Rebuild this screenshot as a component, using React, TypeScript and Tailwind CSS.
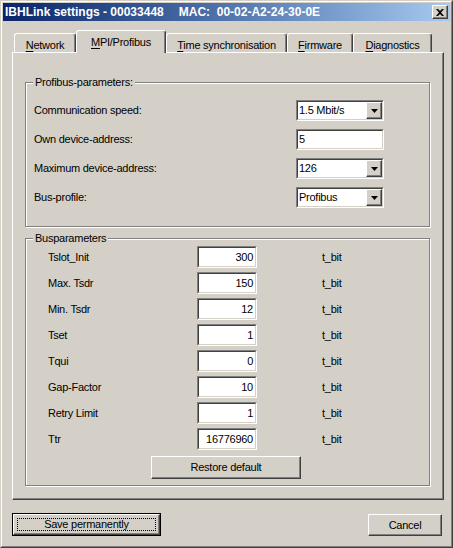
import React from "react";

const raised =
  "border border-t-white border-l-white border-b-[#404040] border-r-[#404040] shadow-[inset_-1px_-1px_0_#808080]";

function Sunken({ className = "", children }: { className?: string; children?: React.ReactNode }) {
  return (
    <div className={`border border-t-[#808080] border-l-[#808080] border-b-white border-r-white ${className}`}>
      <div className="flex h-full items-center border border-t-[#404040] border-l-[#404040] border-b-[#d4d0c8] border-r-[#d4d0c8] bg-white">
        {children}
      </div>
    </div>
  );
}

function Combo({ value }: { value: string }) {
  return (
    <Sunken className="h-[21px] w-[88px]">
      <span className="flex-1 pl-[1px] leading-none">{value}</span>
      <div className={`flex h-full w-[16px] items-center justify-center bg-[#d4d0c8] ${raised}`}>
        <svg width="7" height="4" viewBox="0 0 7 4">
          <path d="M0 0h7L3.5 4z" fill="#000" />
        </svg>
      </div>
    </Sunken>
  );
}

function Group({ title, className, children }: { title: string; className: string; children: React.ReactNode }) {
  return (
    <div className={`relative border border-[#808080] shadow-[inset_1px_1px_0_#fff,1px_1px_0_#fff] ${className}`}>
      <span className="absolute left-[7px] top-[-7px] bg-[#d4d0c8] px-[2px] leading-[12px]">{title}</span>
      {children}
    </div>
  );
}

function Tab({ label, u, width, selected }: { label: string; u: number; width: string; selected?: boolean }) {
  const text = (
    <span>
      {label.slice(0, u)}
      <span className="underline underline-offset-[2px]">{label[u]}</span>
      {label.slice(u + 1)}
    </span>
  );
  return (
    <div
      className={`flex items-start justify-center rounded-t-[3px] border-t border-l border-r border-t-white border-l-white border-r-[#404040] bg-[#d4d0c8] shadow-[inset_-1px_0_0_#808080] ${width} ${
        selected ? "relative z-10 -mb-px h-[23px] pt-[3px]" : "h-[19px] pt-[3px]"
      }`}
    >
      {text}
    </div>
  );
}

const busRows = [
  ["Tslot_Init", "300"],
  ["Max. Tsdr", "150"],
  ["Min. Tsdr", "12"],
  ["Tset", "1"],
  ["Tqui", "0"],
  ["Gap-Factor", "10"],
  ["Retry Limit", "1"],
  ["Ttr", "16776960"],
];

export default function App() {
  return (
    <div className="h-[548px] w-[453px] border border-t-[#d4d0c8] border-l-[#d4d0c8] border-b-[#404040] border-r-[#404040] bg-[#d4d0c8] font-['Liberation_Sans',Arial,sans-serif] text-[11px] tracking-[-0.25px] text-black">
      <div className="h-full border border-t-white border-l-white border-b-[#808080] border-r-[#808080] p-[1px]">
        {/* title bar */}
        <div className="flex h-[18px] items-center justify-between bg-linear-to-r from-[#0a246a] to-[#a6caf0] pl-[2px] pr-[2px]">
          <span className="whitespace-pre text-[12px] font-bold tracking-normal text-white">
            IBHLink settings - 00033448<span className="ml-[15px]">MAC:  00-02-A2-24-30-0E</span>
          </span>
          <div className={`flex h-[14px] w-[16px] items-center justify-center bg-[#d4d0c8] ${raised}`}>
            <svg width="8" height="7" viewBox="0 0 8 7">
              <path d="M0 0h2l2 2 2-2h2L5 3.5 8 7H6L4 5 2 7H0l3-3.5z" fill="#000" />
            </svg>
          </div>
        </div>

        {/* tabs */}
        <div className="mt-[10px] pl-[9px] pr-[6px]">
          <div className="flex h-[21px] items-end">
            <div className="ml-[2px] flex items-end">
              <Tab label="Network" u={0} width="w-[62px]" />
              <Tab label="MPI/Profibus" u={0} width="w-[90px]" selected />
              <Tab label="Time synchronisation" u={0} width="w-[121px]" />
              <Tab label="Firmware" u={0} width="w-[66px]" />
              <Tab label="Diagnostics" u={0} width="w-[79px]" />
            </div>
          </div>

          <div className={`h-[448px] pl-[12px] pr-[13px] pt-[29px] ${raised}`}>
            <Group title="Profibus-parameters:" className="h-[145px] pl-[8px] pr-[45px] pt-[17px]">
              <div className="flex flex-col gap-[8px]">
                <div className="flex h-[21px] items-center justify-between">
                  <span>Communication speed:</span>
                  <Combo value="1.5 Mbit/s" />
                </div>
                <div className="flex h-[21px] items-center justify-between">
                  <span>Own device-address:</span>
                  <Sunken className="h-[21px] w-[88px]">
                    <span className="pl-[1px]">5</span>
                  </Sunken>
                </div>
                <div className="flex h-[21px] items-center justify-between">
                  <span>Maximum device-address:</span>
                  <Combo value="126" />
                </div>
                <div className="flex h-[21px] items-center justify-between">
                  <span>Bus-profile:</span>
                  <Combo value="Profibus" />
                </div>
              </div>
            </Group>

            <Group title="Busparameters" className="mt-[11px] h-[248px] pl-[22px] pt-[7px]">
              <div className="flex flex-col gap-[4px]">
                {busRows.map(([label, value]) => (
                  <div key={label} className="flex h-[22px] items-center">
                    <span className="w-[149px]">{label}</span>
                    <Sunken className="h-[22px] w-[60px]">
                      <span className="flex-1 pr-[2px] text-right">{value}</span>
                    </Sunken>
                    <span className="ml-[65px]">t_bit</span>
                  </div>
                ))}
              </div>
              <div className={`ml-[103px] mt-[6px] flex h-[23px] w-[150px] items-center justify-center ${raised}`}>
                Restore default
              </div>
            </Group>
          </div>
        </div>

        {/* bottom buttons */}
        <div className="mt-[13px] flex items-start justify-between pl-[9px] pr-[8px]">
          <div className="h-[23px] w-[149px] border border-black">
            <div className={`relative flex h-full items-center justify-center ${raised}`}>
              <span className="absolute inset-[3px] border border-dotted border-black" />
              Save permanently
            </div>
          </div>
          <div className={`mt-[1px] flex h-[22px] w-[74px] items-center justify-center ${raised}`}>Cancel</div>
        </div>
      </div>
    </div>
  );
}
